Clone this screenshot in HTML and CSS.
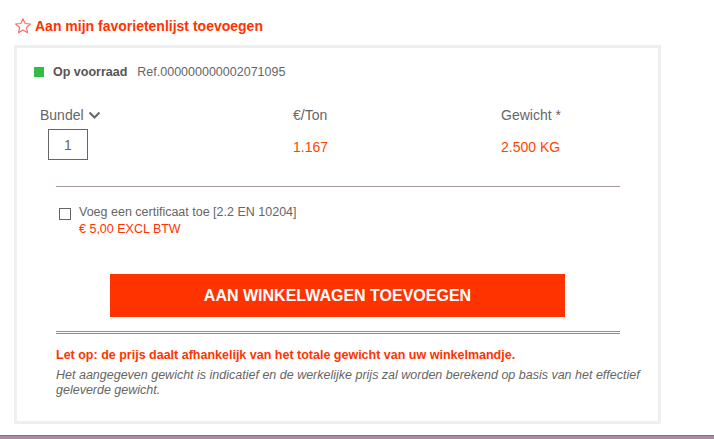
FILE: index.html
```html
<!DOCTYPE html>
<html lang="nl">
<head>
<meta charset="utf-8">
<title>Product</title>
<link rel="stylesheet" href="styles.css">
</head>
<body>
<div class="page">
  <div class="fav">
    <svg class="star" width="18" height="18" viewBox="0 0 24 24"><path d="M12 2.2l2.9 6.4 7 .7-5.3 4.7 1.5 6.9L12 17.3l-6.1 3.6 1.5-6.9-5.3-4.7 7-.7z" fill="none" stroke="#ff6a6a" stroke-width="1.5" stroke-linejoin="round"/></svg>
    <span>Aan mijn favorietenlijst toevoegen</span>
  </div>
  <div class="card">
    <div class="stock">
      <span class="dot"></span>
      <span class="instock">Op voorraad</span>
      <span class="ref">Ref.000000000002071095</span>
    </div>
    <div class="grid">
      <div class="th">Bundel <svg class="chev" width="13" height="9" viewBox="0 0 13 9"><path d="M1.5 1.5l5 5 5-5" fill="none" stroke="#666" stroke-width="2"/></svg></div>
      <div class="th">€/Ton</div>
      <div class="th">Gewicht *</div>
      <div class="cell"><div class="qty">1</div></div>
      <div class="cell val">1.167</div>
      <div class="cell val">2.500 KG</div>
    </div>
    <div class="sep"></div>
    <div class="cert">
      <span class="box"></span>
      <div class="cert-text">
        <div>Voeg een certificaat toe [2.2 EN 10204]</div>
        <div class="price">€ 5,00 EXCL BTW</div>
      </div>
    </div>
    <div class="btn-wrap"><button class="btn">AAN WINKELWAGEN TOEVOEGEN</button></div>
    <div class="dbl"></div>
    <p class="warn">Let op: de prijs daalt afhankelijk van het totale gewicht van uw winkelmandje.</p>
    <p class="note">Het aangegeven gewicht is indicatief en de werkelijke prijs zal worden berekend op basis van het effectief geleverde gewicht.</p>
  </div>
</div>
<div class="bottom-line"></div>
</body>
</html>
```
FILE: styles.css
```css
html, body {
  margin: 0;
  padding: 0;
  background: #fff;
  font-family: "Liberation Sans", Arial, sans-serif;
  color: #666;
}
.page {
  padding: 16px 0 0 14px;
  width: 661px;
  box-sizing: border-box;
}
.fav {
  display: flex;
  align-items: center;
  gap: 3px;
  height: 20px;
  margin-bottom: 9px;
  color: #ff3300;
  font-weight: bold;
  font-size: 14px;
}
.star { flex: none; margin-top: -1px; }
.card {
  border: 3px solid #efefef;
  height: 379px;
  box-sizing: border-box;
  padding: 16px 17px 0 17px;
}
.stock {
  display: flex;
  align-items: center;
  height: 16px;
  font-size: 12.5px;
}
.dot {
  width: 10px;
  height: 10px;
  background: #33bb44;
  margin-right: 9px;
}
.instock { font-weight: bold; color: #555; margin-right: 10px; }
.ref { color: #666; }
.grid {
  display: grid;
  grid-template-columns: 253px 208px 1fr;
  margin: 27px 0 0 6px;
  row-gap: 6px;
  align-items: center;
}
.th {
  font-size: 14px;
  line-height: 16px;
  color: #666;
  display: flex;
  align-items: center;
}
.chev { margin-left: 4px; }
.qty {
  width: 40px;
  height: 31px;
  box-sizing: border-box;
  border: 1px solid #666;
  margin-left: 8px;
  display: flex;
  align-items: center;
  justify-content: center;
  font-size: 14px;
  color: #666;
}
.val {
  color: #ff4400;
  font-size: 14px;
  padding-top: 4px;
}
.sep {
  height: 1px;
  background: #a8969f;
  margin: 26px 21px 0 22px;
}
.cert {
  display: flex;
  margin: 17px 0 0 25px;
  font-size: 12.5px;
  line-height: 17px;
  color: #666;
}
.box {
  width: 10px;
  height: 10px;
  border: 1px solid #666;
  margin: 4px 8px 0 0;
  flex: none;
}
.price { color: #ff3300; }
.btn-wrap {
  display: flex;
  justify-content: center;
  margin-top: 36px;
}
.btn {
  width: 455px;
  height: 43px;
  border: 0;
  background: #ff3300;
  color: #fff;
  font-family: "Liberation Sans", Arial, sans-serif;
  font-weight: bold;
  font-size: 16px;
  padding: 0;
}
.dbl {
  height: 1px;
  border-top: 1px solid #a57f9d;
  border-bottom: 1px solid #a57f9d;
  margin: 14px 21px 0 22px;
}
.warn {
  margin: 14px 21px 0 22px;
  color: #ff3300;
  font-weight: bold;
  font-size: 12.5px;
  line-height: 15px;
}
.note {
  margin: 5px -10px 0 22px;
  font-style: italic;
  font-size: 12.5px;
  line-height: 15px;
  color: #666;
}
.bottom-line {
  margin-top: 11px;
  height: 5px;
  background: #a98aa5;
  border-top: 1px solid #8a6e86;
}
```
